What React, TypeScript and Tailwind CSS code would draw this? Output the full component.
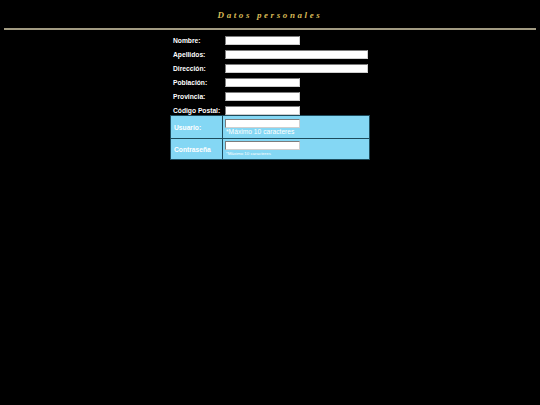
import React from "react";

const labelCls =
  "pl-[3px] text-[6.7px] leading-[9px] font-bold text-white whitespace-nowrap";

function Field({ w }: { w: "short" | "long" }) {
  return (
    <input
      type="text"
      className={
        (w === "short" ? "w-[75px]" : "w-[143px]") +
        " block h-[9px] bg-white border border-[#7c7c7c] border-b-[#cfcfcf] border-r-[#cfcfcf] outline-none"
      }
    />
  );
}

const rows: { label: string; w: "short" | "long" }[] = [
  { label: "Nombre:", w: "short" },
  { label: "Apellidos:", w: "long" },
  { label: "Dirección:", w: "long" },
  { label: "Población:", w: "short" },
  { label: "Provincia:", w: "short" },
  { label: "Código Postal:", w: "short" },
];

export default function App() {
  return (
    <div
      className="w-[540px] h-[405px] bg-black overflow-hidden"
      style={{ fontFamily: '"Liberation Sans", Arial, sans-serif' }}
    >
      <div className="h-[28px] pt-[11px] text-center">
        <h1
          className="text-[9px] leading-[9px] italic font-bold tracking-[2.6px] text-[#d8ba56]"
          style={{ fontFamily: '"Liberation Serif", "Times New Roman", serif' }}
        >
          Datos personales
        </h1>
      </div>
      <div className="mx-[4px] h-[2px] bg-[#a29b82]" />

      <div className="mx-auto mt-[4px] w-[200px]">
        {rows.map((r, i) => (
          <div
            key={r.label}
            className={
              "grid grid-cols-[53px_147px] items-start pt-[2px] " +
              (i === rows.length - 1 ? "h-[11px]" : "h-[14px]")
            }
          >
            <div className={labelCls}>{r.label}</div>
            <div className="pl-[2px]">
              <Field w={r.w} />
            </div>
          </div>
        ))}

        <div className="grid grid-cols-[51px_146px] gap-px p-px bg-[#1d4b5c]">
          <div className="h-[22px] bg-[#84d7f4] flex items-center">
            <div className={labelCls}>Usuario:</div>
          </div>
          <div className="h-[22px] bg-[#84d7f4] pt-[3px] pl-[2px]">
            <Field w="short" />
            <div className="text-[6.7px] leading-[7px] text-white pl-px whitespace-nowrap">
              *Máximo 10 caracteres
            </div>
          </div>
          <div className="h-[20px] bg-[#84d7f4] flex items-center">
            <div className={labelCls}>Contraseña</div>
          </div>
          <div className="h-[20px] bg-[#84d7f4] pt-[2px] pl-[2px]">
            <Field w="short" />
            <div className="text-[4.4px] leading-[6px] text-white pl-px pt-px whitespace-nowrap">
              *Máximo 10 caracteres
            </div>
          </div>
        </div>
      </div>
    </div>
  );
}
